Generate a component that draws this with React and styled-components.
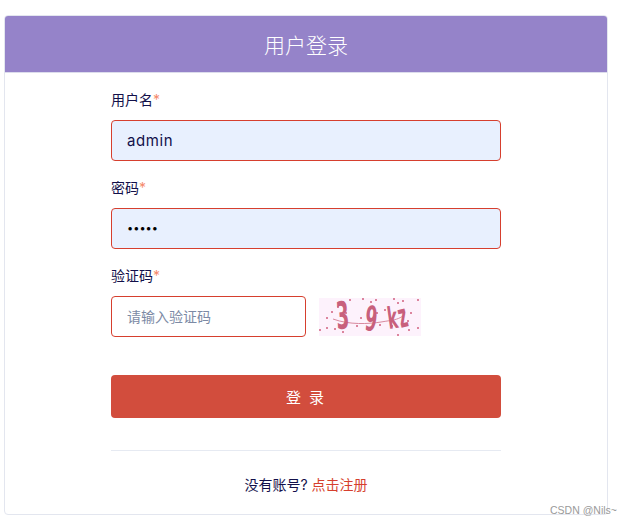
import React from "react"
import styled, { createGlobalStyle } from "styled-components"

const GlobalStyle = createGlobalStyle`
  html, body {
    margin: 0;
    padding: 0;
    background: #fff;
  }
  body {
    font-family: Inter, "Noto Sans CJK SC", sans-serif;
    color: #12104a;
  }
  * {
    box-sizing: border-box;
  }
`

const Page = styled.div`
  position: relative;
  width: 630px;
  height: 524px;
  padding: 15px 22px 0 4px;
  overflow: hidden;
`

const Card = styled.div`
  width: 604px;
  height: 500px;
  background: #fff;
  border: 1px solid #e3e6ef;
  border-radius: 4px;
  overflow: hidden;
`

const Header = styled.div`
  height: 57px;
  display: flex;
  align-items: center;
  justify-content: center;
  background: #9583c9;
  color: #fff;
  font-size: 21px;
  font-weight: 300;
  border-bottom: 1px solid #dcdcec;
`

const Form = styled.form`
  width: 390px;
  margin: 0 auto;
  padding-top: 16px;
`

const Field = styled.div`
  margin-bottom: 16px;
`

const Label = styled.label`
  display: block;
  height: 21px;
  line-height: 21px;
  margin-bottom: 10px;
  font-size: 14px;
`

const Star = styled.span`
  color: #f58a6c;
`

const Input = styled.input`
  display: block;
  width: ${({ $width }) => $width || "100%"};
  height: 41px;
  padding: 0 15px 1px;
  font-family: Inter, "Noto Sans CJK SC", sans-serif;
  font-size: 15px;
  letter-spacing: 0.6px;
  color: #12104a;
  background: ${({ $filled }) => ($filled ? "#e8f0fe" : "#fff")};
  border: 1px solid #d63f2e;
  border-radius: 4px;
  outline: none;

  &::placeholder {
    font-size: 14px;
    letter-spacing: 0;
    color: #7c8aa5;
    opacity: 1;
  }
`

const PasswordInput = styled(Input)`
  font-size: 11px;
  letter-spacing: 0;
  color: #000;
`

const CaptchaRow = styled.div`
  display: flex;
  align-items: center;
  gap: 13px;
`

const CaptchaImage = styled.svg`
  display: block;
  width: 102px;
  height: 38px;
`

const CaptchaChar = styled.text`
  font-family: "DejaVu Sans", sans-serif;
  font-weight: 700;
  font-size: 30px;
  fill: #c8607c;
`

const SubmitButton = styled.button`
  display: block;
  width: 100%;
  height: 43px;
  margin-top: 38px;
  font-family: Inter, "Noto Sans CJK SC", sans-serif;
  font-size: 15px;
  letter-spacing: 2px;
  color: #fff;
  background: #d24d3d;
  border: none;
  border-radius: 4px;
`

const Divider = styled.hr`
  height: 1px;
  margin: 32px 0 0;
  background: #e6eaf2;
  border: none;
`

const Footer = styled.div`
  margin-top: 23px;
  text-align: center;
  font-size: 14px;
  line-height: 21px;
`

const RegisterLink = styled.a`
  color: #d63f2e;
  text-decoration: none;
`

const Watermark = styled.div`
  position: absolute;
  left: 550px;
  top: 503px;
  font-family: "Liberation Sans", Arial, sans-serif;
  font-size: 10.5px;
  line-height: 14px;
  color: #9a9a9a;
`

const noiseDots = [
  [31, 2], [44, 1], [57, 2], [75, 1], [84, 3], [99, 2], [13, 14],
  [8, 20], [19, 9], [27, 15], [42, 20], [66, 12], [79, 5], [92, 15],
  [1, 32], [8, 30], [16, 31], [24, 34], [38, 28], [61, 27], [73, 28],
  [89, 23], [99, 30], [79, 37], [58, 15], [90, 32], [52, 4],
]

const captchaChars = [
  { char: "3", transform: "translate(18 31) rotate(-4) scale(0.62 1.25)" },
  { char: "9", transform: "translate(45 32) rotate(6) scale(0.58 1.15)" },
  { char: "k", transform: "translate(70 31) rotate(-8) scale(0.5 1.0)" },
  { char: "z", transform: "translate(82 30) rotate(-14) scale(0.5 1.1)" },
]

const Captcha = () => (
  <CaptchaImage viewBox="0 0 102 38">
    <rect width="102" height="38" fill="#fdf2fc" />
    <path d="M14 21 C30 27 50 26 62 24 S78 22 84 18" fill="none" stroke="#d88a9f" strokeWidth="1" />
    {noiseDots.map(([x, y]) => (
      <circle key={`${x}-${y}`} cx={x} cy={y} r="1" fill="#d0607f" />
    ))}
    {captchaChars.map(({ char, transform }) => (
      <CaptchaChar key={char} transform={transform}>{char}</CaptchaChar>
    ))}
  </CaptchaImage>
)

const App = () => (
  <Page>
    <GlobalStyle />
    <Card>
      <Header>用户登录</Header>
      <Form onSubmit={(e) => e.preventDefault()}>
        <Field>
          <Label>用户名<Star>*</Star></Label>
          <Input $filled type="text" defaultValue="admin" />
        </Field>
        <Field>
          <Label>密码<Star>*</Star></Label>
          <PasswordInput $filled type="password" defaultValue="admin" />
        </Field>
        <Field>
          <Label>验证码<Star>*</Star></Label>
          <CaptchaRow>
            <Input $width="195px" type="text" placeholder="请输入验证码" />
            <Captcha />
          </CaptchaRow>
        </Field>
        <SubmitButton type="submit">登 录</SubmitButton>
        <Divider />
        <Footer>
          没有账号? <RegisterLink href="#">点击注册</RegisterLink>
        </Footer>
      </Form>
    </Card>
    <Watermark>CSDN @Nils~</Watermark>
  </Page>
)

export default App
